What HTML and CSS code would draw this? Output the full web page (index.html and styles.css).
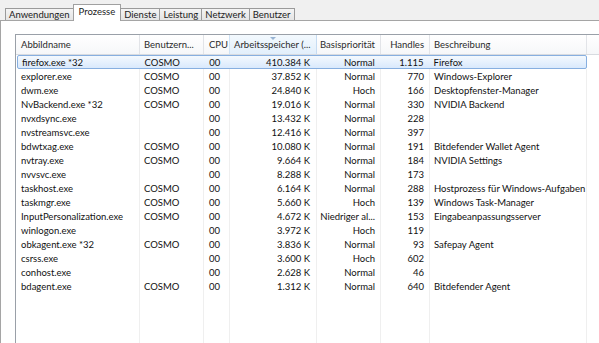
FILE: index.html
```html
<!DOCTYPE html>
<html lang="de">
<head>
    <meta charset="UTF-8">
    <title>Windows Task-Manager - Prozesse</title>
    <link rel="stylesheet" href="styles.css">
</head>
<body>
    <div class="tabs">
        <div class="tab">Anwendungen</div>
        <div class="tab active">Prozesse</div>
        <div class="tab">Dienste</div>
        <div class="tab">Leistung</div>
        <div class="tab">Netzwerk</div>
        <div class="tab">Benutzer</div>
    </div>

    <div class="panel">
        <div class="list">
            <div class="head">
                <div class="cell c-name">Abbildname</div>
                <div class="cell c-user">Benutzern...</div>
                <div class="cell c-cpu">CPU</div>
                <div class="cell c-mem sorted">Arbeitsspeicher (...<span class="arrow"></span></div>
                <div class="cell c-prio">Basispriorität</div>
                <div class="cell c-hnd">Handles</div>
                <div class="cell c-desc">Beschreibung</div>
                <div class="cell c-rest"></div>
            </div>

            <div class="row selected">
                <div class="cell c-name">firefox.exe *32</div>
                <div class="cell c-user">COSMO</div>
                <div class="cell c-cpu">00</div>
                <div class="cell c-mem">410.384 K</div>
                <div class="cell c-prio">Normal</div>
                <div class="cell c-hnd">1.115</div>
                <div class="cell c-desc">Firefox</div>
            </div>
            <div class="row">
                <div class="cell c-name">explorer.exe</div>
                <div class="cell c-user">COSMO</div>
                <div class="cell c-cpu">00</div>
                <div class="cell c-mem">37.852 K</div>
                <div class="cell c-prio">Normal</div>
                <div class="cell c-hnd">770</div>
                <div class="cell c-desc">Windows-Explorer</div>
            </div>
            <div class="row">
                <div class="cell c-name">dwm.exe</div>
                <div class="cell c-user">COSMO</div>
                <div class="cell c-cpu">00</div>
                <div class="cell c-mem">24.840 K</div>
                <div class="cell c-prio">Hoch</div>
                <div class="cell c-hnd">166</div>
                <div class="cell c-desc">Desktopfenster-Manager</div>
            </div>
            <div class="row">
                <div class="cell c-name">NvBackend.exe *32</div>
                <div class="cell c-user">COSMO</div>
                <div class="cell c-cpu">00</div>
                <div class="cell c-mem">19.016 K</div>
                <div class="cell c-prio">Normal</div>
                <div class="cell c-hnd">330</div>
                <div class="cell c-desc">NVIDIA Backend</div>
            </div>
            <div class="row">
                <div class="cell c-name">nvxdsync.exe</div>
                <div class="cell c-user"></div>
                <div class="cell c-cpu">00</div>
                <div class="cell c-mem">13.432 K</div>
                <div class="cell c-prio">Normal</div>
                <div class="cell c-hnd">228</div>
                <div class="cell c-desc"></div>
            </div>
            <div class="row">
                <div class="cell c-name">nvstreamsvc.exe</div>
                <div class="cell c-user"></div>
                <div class="cell c-cpu">00</div>
                <div class="cell c-mem">12.416 K</div>
                <div class="cell c-prio">Normal</div>
                <div class="cell c-hnd">397</div>
                <div class="cell c-desc"></div>
            </div>
            <div class="row">
                <div class="cell c-name">bdwtxag.exe</div>
                <div class="cell c-user">COSMO</div>
                <div class="cell c-cpu">00</div>
                <div class="cell c-mem">10.080 K</div>
                <div class="cell c-prio">Normal</div>
                <div class="cell c-hnd">191</div>
                <div class="cell c-desc">Bitdefender Wallet Agent</div>
            </div>
            <div class="row">
                <div class="cell c-name">nvtray.exe</div>
                <div class="cell c-user">COSMO</div>
                <div class="cell c-cpu">00</div>
                <div class="cell c-mem">9.664 K</div>
                <div class="cell c-prio">Normal</div>
                <div class="cell c-hnd">184</div>
                <div class="cell c-desc">NVIDIA Settings</div>
            </div>
            <div class="row">
                <div class="cell c-name">nvvsvc.exe</div>
                <div class="cell c-user"></div>
                <div class="cell c-cpu">00</div>
                <div class="cell c-mem">8.288 K</div>
                <div class="cell c-prio">Normal</div>
                <div class="cell c-hnd">173</div>
                <div class="cell c-desc"></div>
            </div>
            <div class="row">
                <div class="cell c-name">taskhost.exe</div>
                <div class="cell c-user">COSMO</div>
                <div class="cell c-cpu">00</div>
                <div class="cell c-mem">6.164 K</div>
                <div class="cell c-prio">Normal</div>
                <div class="cell c-hnd">288</div>
                <div class="cell c-desc">Hostprozess für Windows-Aufgaben</div>
            </div>
            <div class="row">
                <div class="cell c-name">taskmgr.exe</div>
                <div class="cell c-user">COSMO</div>
                <div class="cell c-cpu">00</div>
                <div class="cell c-mem">5.660 K</div>
                <div class="cell c-prio">Hoch</div>
                <div class="cell c-hnd">139</div>
                <div class="cell c-desc">Windows Task-Manager</div>
            </div>
            <div class="row">
                <div class="cell c-name">InputPersonalization.exe</div>
                <div class="cell c-user">COSMO</div>
                <div class="cell c-cpu">00</div>
                <div class="cell c-mem">4.672 K</div>
                <div class="cell c-prio">Niedriger al...</div>
                <div class="cell c-hnd">153</div>
                <div class="cell c-desc">Eingabeanpassungsserver</div>
            </div>
            <div class="row">
                <div class="cell c-name">winlogon.exe</div>
                <div class="cell c-user"></div>
                <div class="cell c-cpu">00</div>
                <div class="cell c-mem">3.972 K</div>
                <div class="cell c-prio">Hoch</div>
                <div class="cell c-hnd">119</div>
                <div class="cell c-desc"></div>
            </div>
            <div class="row">
                <div class="cell c-name">obkagent.exe *32</div>
                <div class="cell c-user">COSMO</div>
                <div class="cell c-cpu">00</div>
                <div class="cell c-mem">3.836 K</div>
                <div class="cell c-prio">Normal</div>
                <div class="cell c-hnd">93</div>
                <div class="cell c-desc">Safepay Agent</div>
            </div>
            <div class="row">
                <div class="cell c-name">csrss.exe</div>
                <div class="cell c-user"></div>
                <div class="cell c-cpu">00</div>
                <div class="cell c-mem">3.600 K</div>
                <div class="cell c-prio">Hoch</div>
                <div class="cell c-hnd">602</div>
                <div class="cell c-desc"></div>
            </div>
            <div class="row">
                <div class="cell c-name">conhost.exe</div>
                <div class="cell c-user"></div>
                <div class="cell c-cpu">00</div>
                <div class="cell c-mem">2.628 K</div>
                <div class="cell c-prio">Normal</div>
                <div class="cell c-hnd">46</div>
                <div class="cell c-desc"></div>
            </div>
            <div class="row">
                <div class="cell c-name">bdagent.exe</div>
                <div class="cell c-user">COSMO</div>
                <div class="cell c-cpu">00</div>
                <div class="cell c-mem">1.312 K</div>
                <div class="cell c-prio">Normal</div>
                <div class="cell c-hnd">640</div>
                <div class="cell c-desc">Bitdefender Agent</div>
            </div>

            <!-- leere Fläche unter den Zeilen, Spaltenlinien laufen weiter -->
            <div class="row filler">
                <div class="cell c-name"></div>
                <div class="cell c-user"></div>
                <div class="cell c-cpu"></div>
                <div class="cell c-mem"></div>
                <div class="cell c-prio"></div>
                <div class="cell c-hnd"></div>
                <div class="cell c-desc"></div>
            </div>
        </div>
    </div>
</body>
</html>
```

FILE: styles.css
```css
body {
    margin: 0;
    height: 343px;
    overflow: hidden;
    background-color: #f0f0f0;
    font-family: Lato, "Noto Sans", Arial, sans-serif;
    font-size: 9.5px;
    color: #111;
}

/* Reiter oben */
.tabs {
    display: flex;
    align-items: flex-end;
    height: 20px;
    padding-left: 5px;
    position: relative;
    z-index: 1;
}
.tab {
    height: 11px;
    line-height: 11px;
    padding: 0 3px;
    border: 1px solid #9a9a9a;
    border-bottom: none;
    margin-left: -1px;
    background: linear-gradient(#f4f4f4, #e4e4e4);
    color: #222;
}
.tab:first-child {
    margin-left: 0;
}
.tab.active {
    height: 16px;
    line-height: 14px;
    margin-bottom: -1px;
    padding: 0 5px;
    background: #fff;
    border-color: #a0a0a0;
}

.panel {
    border-top: 1px solid #a5a5a5;
    border-left: 1px solid #a5a5a5;
    background-color: #fff;
    padding: 13px 0 0 14px;
    height: 320px;
}

/* Listenansicht */
.list {
    width: 640px;
    height: 310px;
    border-top: 1px solid #9aa0a8;
    border-left: 1px solid #9aa0a8;
    display: flex;
    flex-direction: column;
}
.head,
.row {
    display: flex;
    flex-shrink: 0;
}
.head {
    height: 19px;
    border-bottom: 1px solid #d8dbe0;
    background: linear-gradient(#ffffff, #f6f7f9);
    color: #2a2a2a;
}
.head .cell {
    line-height: 19px;
    border-right: 1px solid #e2e4e8;
}
.row {
    height: 14px;
}
.row .cell {
    line-height: 15px;
    border-right: 1px solid #efefef;
}
.row.filler {
    flex: 1;
}

.cell {
    box-sizing: border-box;
    height: 100%;
    white-space: nowrap;
    overflow: hidden;
}
.c-name { width: 124px; padding-left: 5px; }
.c-user { width: 64px; padding-left: 4px; }
.c-cpu { width: 26px; padding-left: 5px; }
.c-mem { width: 87px; padding-right: 6px; text-align: right; }
.c-prio { width: 64px; padding-right: 5px; text-align: right; }
.c-hnd { width: 49px; padding-right: 5px; text-align: right; }
.c-desc { width: 157px; padding-left: 4px; }
.c-rest { flex: 1; border-right: none; }

.head .c-mem {
    padding-right: 4px;
    text-align: left;
    padding-left: 4px;
}

/* sortierte Spalte */
.head .sorted {
    position: relative;
    background: linear-gradient(#f3f9fe, #e2effb);
    border-left: 1px solid #cfe3f6;
    border-right: 1px solid #c6dcf2;
    margin-left: -1px;
    width: 88px;
}
.arrow {
    position: absolute;
    top: 2px;
    left: 40px;
    width: 0;
    height: 0;
    border-left: 3px solid transparent;
    border-right: 3px solid transparent;
    border-top: 3px solid #97b3d3;
}

/* markierte Zeile */
.row.selected {
    margin: 0 9px 0 1px;
    width: 570px;
    border: 1px solid #87afe0;
    border-radius: 2px;
    background: linear-gradient(#f4f9fe, #d9e9fc);
    box-sizing: border-box;
}
.row.selected .cell {
    border-right-color: transparent;
    line-height: 13px;
}
.row.selected .c-name { width: 123px; padding-left: 4px; }
```
